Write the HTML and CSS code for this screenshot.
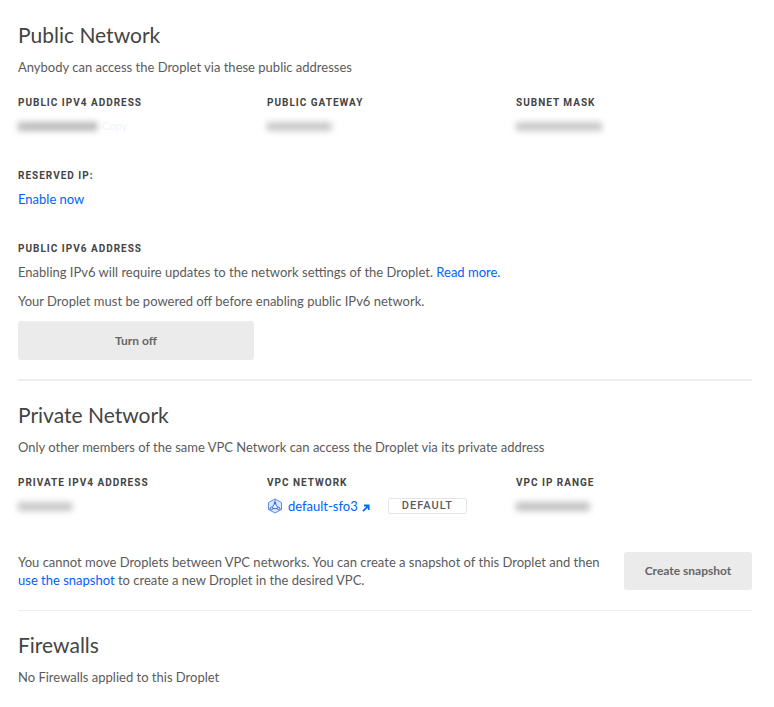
FILE: index.html
```html
<!DOCTYPE html>
<html lang="en">
<head>
<meta charset="utf-8">
<title>Droplet networking</title>
<link rel="stylesheet" href="styles.css">
</head>
<body>
<main class="page">
  <section class="section section-public">
    <h2>Public Network</h2>
    <p class="intro">Anybody can access the Droplet via these public addresses</p>
    <div class="columns">
      <div class="field">
        <h3>Public IPv4 address</h3>
        <div class="value"><span class="masked masked-ip"></span><button class="copy" type="button">Copy</button></div>
      </div>
      <div class="field">
        <h3>Public gateway</h3>
        <div class="value"><span class="masked masked-gateway"></span></div>
      </div>
      <div class="field">
        <h3>Subnet mask</h3>
        <div class="value"><span class="masked masked-subnet"></span></div>
      </div>
    </div>
    <div class="field block">
      <h3>Reserved IP:</h3>
      <p class="value"><a href="#">Enable now</a></p>
    </div>
    <div class="field block">
      <h3>Public IPv6 address</h3>
      <p class="value">Enabling IPv6 will require updates to the network settings of the Droplet. <a href="#">Read more.</a></p>
      <p class="note">Your Droplet must be powered off before enabling public IPv6 network.</p>
      <div class="columns power"><button class="button" type="button">Turn off</button></div>
    </div>
  </section>

  <section class="section section-private">
    <h2>Private Network</h2>
    <p class="intro">Only other members of the same VPC Network can access the Droplet via its private address</p>
    <div class="columns">
      <div class="field">
        <h3>Private IPv4 address</h3>
        <div class="value"><span class="masked masked-private"></span></div>
      </div>
      <div class="field">
        <h3>VPC network</h3>
        <div class="value vpc">
          <svg class="vpc-icon" viewBox="0 0 16 16" aria-hidden="true">
            <path d="M8 1l6.500 3.500v7L8 15l-6.500-3.500v-7z" fill="#dbe7fd" stroke="#5f8be6" stroke-linejoin="round"/>
            <path d="M8 5L4.500 10.500h7z" fill="#eaf1ff" stroke="#3e6fd8"/>
            <path d="M8 1v3M2 11.500l2-1M14 11.500l-2-1" stroke="#5f8be6"/>
            <circle cx="8" cy="5" r="1.300" fill="#3e6fd8"/>
            <circle cx="4.600" cy="10.400" r="1.300" fill="#dbe7fd" stroke="#3e6fd8"/>
            <circle cx="11.400" cy="10.400" r="1.300" fill="#dbe7fd" stroke="#3e6fd8"/>
          </svg>
          <a href="#">default-sfo3</a>
          <svg class="arrow-icon" viewBox="0 0 8 8" aria-hidden="true">
            <path d="M1 7.200L6 2.200M2 1.500h4.700V6" fill="none" stroke="#0069ff" stroke-width="1.800"/>
          </svg>
          <span class="badge">Default</span>
        </div>
      </div>
      <div class="field">
        <h3>VPC IP range</h3>
        <div class="value"><span class="masked masked-range"></span></div>
      </div>
    </div>
    <div class="move">
      <p>You cannot move Droplets between VPC networks. You can create a snapshot of this Droplet and then <a href="#">use the snapshot</a> to create a new Droplet in the desired VPC.</p>
      <button class="button button-snapshot" type="button">Create snapshot</button>
    </div>
  </section>

  <section class="section section-firewalls">
    <h2>Firewalls</h2>
    <p class="intro">No Firewalls applied to this Droplet</p>
  </section>
</main>
</body>
</html>
```
FILE: styles.css
```css
* { box-sizing: border-box; }

body {
  margin: 0;
  background: #fff;
  color: #5b5b5b;
  font: 13px/18px Lato, "Liberation Sans", sans-serif;
}

h2, h3, p { margin: 0; }

a { color: #0061ff; text-decoration: none; }

.page { padding: 0 22px 20px 18px; }

.section { padding-top: 20px; }
.section-public { padding-top: 21px; padding-bottom: 19px; border-bottom: 2px solid #eee; }
.section-private { padding-bottom: 20px; border-bottom: 1px solid #eee; }

h2 { color: #444; font-size: 21px; font-weight: 400; line-height: 28px; }

.intro { margin-top: 9px; }

.columns {
  display: grid;
  grid-template-columns: repeat(3, minmax(0, 1fr));
  column-gap: 13px;
}

.intro + .columns { margin-top: 18px; }
.block { margin-top: 32px; }

h3 {
  color: #444;
  font-family: Roboto, "Liberation Sans", sans-serif;
  font-size: 10px;
  font-weight: 700;
  letter-spacing: 1px;
  text-transform: uppercase;
}

.value { display: block; min-height: 18px; margin-top: 5px; }
div.value { display: flex; align-items: center; }
.note { margin-top: 11px; }
.power { margin-top: 11px; }

.masked {
  height: 9px;
  border-radius: 3px;
  background: repeating-linear-gradient(90deg, #b0b0b0 0 5px, #c8c8c8 5px 9px);
  filter: blur(3px);
}
.masked-ip { width: 80px; }
.masked-gateway { width: 65px; opacity: .8; }
.masked-subnet { width: 86px; opacity: .8; }
.masked-private { width: 55px; opacity: .8; }
.masked-range { width: 74px; opacity: .9; }

.copy {
  margin-left: 4px;
  padding: 0;
  border: 0;
  background: none;
  color: #eff4fc;
  font: inherit;
  font-size: 11px;
}

.button {
  height: 39px;
  border: 0;
  border-radius: 3px;
  background: #ebebeb;
  color: #666;
  font: inherit;
  font-size: 12px;
  font-weight: 700;
}

.vpc-icon { flex: none; width: 16px; height: 16px; margin-right: 5px; }
.arrow-icon { flex: none; width: 8px; height: 8px; margin: 3px 18px 0 4px; }

.badge {
  padding: 0 13px;
  border: 1px solid #e5e5e5;
  border-radius: 2px;
  font-family: Roboto, "Liberation Sans", sans-serif;
  font-size: 11px;
  font-weight: 500;
  letter-spacing: 1px;
  line-height: 14px;
  text-transform: uppercase;
}

.move { display: flex; align-items: center; gap: 16px; margin-top: 37px; }
.move p { flex: 1; }
.button-snapshot { flex: none; width: 128px; height: 38px; }
```
